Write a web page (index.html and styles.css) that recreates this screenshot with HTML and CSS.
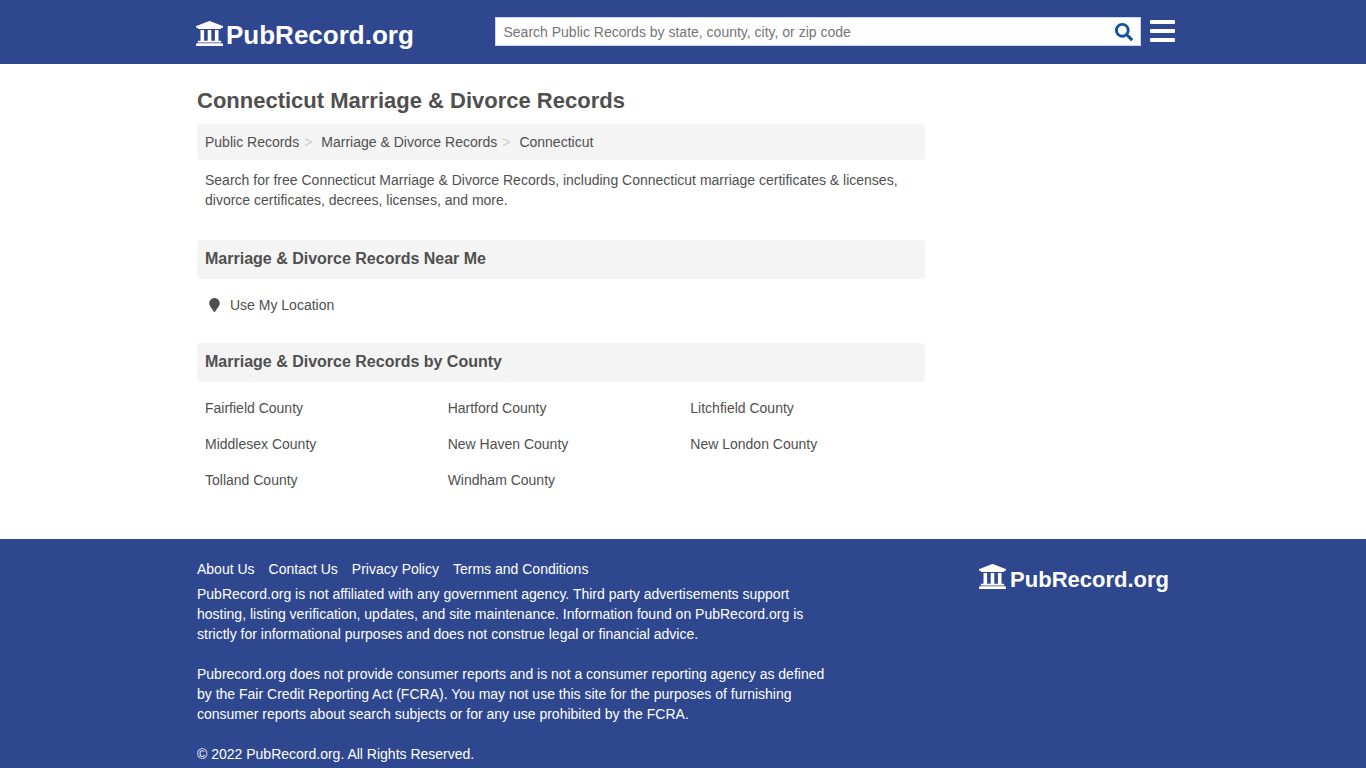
FILE: index.html
```html
<!DOCTYPE html>
<html lang="en">
	<head>
		<meta charset="UTF-8">
		<meta name="viewport" content="width=device-width, initial-scale=1.0">
		<title>Connecticut Marriage &amp; Divorce Records</title>
		<link rel="stylesheet" href="styles.css">
	</head>
	<body>
		<svg class="defs" width="0" height="0">
			<symbol id="landmark" viewBox="16 32 480 448" preserveAspectRatio="none">
				<path d="M496 128v16a8 8 0 0 1-8 8h-24v12c0 6.627-5.373 12-12 12H60c-6.627 0-12-5.373-12-12v-12H24a8 8 0 0 1-8-8v-16a8 8 0 0 1 4.941-7.392l232-88a7.996 7.996 0 0 1 6.118 0l232 88A8 8 0 0 1 496 128zm-24 304H40c-13.255 0-24 10.745-24 24v16a8 8 0 0 0 8 8h464a8 8 0 0 0 8-8v-16c0-13.255-10.745-24-24-24zM96 192v192H60c-6.627 0-12 5.373-12 12v20h416v-20c0-6.627-5.373-12-12-12h-36V192h-64v192h-64V192h-64v192h-64V192H96z"/>
			</symbol>
		</svg>

		<header class="header">
			<div class="container header-row">
				<a class="logo" href="#"><svg class="logo-icon"><use href="#landmark"/></svg><span>PubRecord.org</span></a>
				<form class="search">
					<input type="text" placeholder="Search Public Records by state, county, city, or zip code">
					<button type="button" aria-label="Search">
						<svg viewBox="0 0 512 512"><path d="M505 442.700L405.300 343c-4.500-4.500-10.600-7-17-7H372c27.600-35.300 44-79.700 44-128C416 93.100 322.900 0 208 0S0 93.100 0 208s93.100 208 208 208c48.300 0 92.700-16.400 128-44v16.300c0 6.400 2.500 12.500 7 17l99.700 99.700c9.400 9.400 24.600 9.400 33.900 0l28.300-28.300c9.400-9.400 9.400-24.600.1-34zM208 336c-70.700 0-128-57.200-128-128 0-70.700 57.200-128 128-128 70.700 0 128 57.200 128 128 0 70.700-57.200 128-128 128z"/></svg>
					</button>
				</form>
				<a class="menu" href="#" aria-label="Menu"><span></span><span></span><span></span></a>
			</div>
		</header>

		<main class="container">
			<div class="content">
				<h1>Connecticut Marriage &amp; Divorce Records</h1>
				<ol class="breadcrumb">
					<li><a href="#">Public Records</a></li>
					<li><a href="#">Marriage &amp; Divorce Records</a></li>
					<li><a href="#">Connecticut</a></li>
				</ol>
				<p class="intro">Search for free Connecticut Marriage &amp; Divorce Records, including Connecticut marriage certificates &amp; licenses, divorce certificates, decrees, licenses, and more.</p>

				<h2>Marriage &amp; Divorce Records Near Me</h2>
				<a class="location" href="#">
					<svg viewBox="0 0 384 512"><path d="M172.268 501.670C26.970 291.031 0 269.413 0 192 0 85.961 85.961 0 192 0s192 85.961 192 192c0 77.413-26.970 99.031-172.268 309.670-9.535 13.774-29.930 13.773-39.464 0z"/></svg>
					<span>Use My Location</span>
				</a>

				<h2>Marriage &amp; Divorce Records by County</h2>
				<ul class="counties">
					<li><a href="#">Fairfield County</a></li>
					<li><a href="#">Hartford County</a></li>
					<li><a href="#">Litchfield County</a></li>
					<li><a href="#">Middlesex County</a></li>
					<li><a href="#">New Haven County</a></li>
					<li><a href="#">New London County</a></li>
					<li><a href="#">Tolland County</a></li>
					<li><a href="#">Windham County</a></li>
				</ul>
			</div>
		</main>

		<footer class="footer">
			<div class="container footer-row">
				<div class="footer-text">
					<nav>
						<a href="#">About Us</a>
						<a href="#">Contact Us</a>
						<a href="#">Privacy Policy</a>
						<a href="#">Terms and Conditions</a>
					</nav>
					<p>PubRecord.org is not affiliated with any government agency. Third party advertisements support hosting, listing verification, updates, and site maintenance. Information found on PubRecord.org is strictly for informational purposes and does not construe legal or financial advice.</p>
					<p>Pubrecord.org does not provide consumer reports and is not a consumer reporting agency as defined by the Fair Credit Reporting Act (FCRA). You may not use this site for the purposes of furnishing consumer reports about search subjects or for any use prohibited by the FCRA.</p>
					<p>© 2022 PubRecord.org. All Rights Reserved.</p>
				</div>
				<a class="logo logo-small" href="#"><svg class="logo-icon"><use href="#landmark"/></svg><span>PubRecord.org</span></a>
			</div>
		</footer>
	</body>
</html>
```
FILE: styles.css
```css
* {
	box-sizing: border-box;
	margin: 0;
	padding: 0;
}

html {
	overflow: hidden;
}

body {
	font-family: Arial, "Liberation Sans", sans-serif;
	font-size: 14px;
	line-height: 20px;
	color: #4f4f4f;
	background: #fff;
}

a {
	color: inherit;
	text-decoration: none;
}

ul,
ol {
	list-style: none;
}

.defs {
	display: block;
}

.container {
	width: 972px;
	margin: 0 auto;
}

/* header */
.header {
	height: 64px;
	background: #2e478f;
}

.header-row {
	display: flex;
	align-items: flex-start;
}

.logo {
	display: flex;
	color: #fff;
	font-size: 26px;
	font-weight: bold;
	line-height: 30px;
}

.header .logo {
	width: 299px;
	margin-left: -1px;
	padding-top: 20px;
}

.logo-icon {
	width: 27px;
	height: 25px;
	margin: 1px 3px 0 0;
	fill: #fff;
}

.search {
	display: flex;
	width: 646px;
	height: 29px;
	margin-top: 17px;
	background: #fff;
	border: 1px solid #c5d9f5;
}

.search input {
	flex: 1;
	padding: 0 7.5px;
	border: 0;
	outline: 0;
	background: none;
	font: inherit;
}

.search input::placeholder {
	color: #757575;
}

.search button {
	width: 33px;
	padding: 0 7px 0 8px;
	border: 0;
	background: none;
}

.search svg {
	display: block;
	width: 18px;
	height: 18px;
	fill: #0f539c;
}

.menu {
	display: flex;
	flex-direction: column;
	gap: 5px;
	flex: none;
	width: 25px;
	margin: 19.5px -7px 0 9px;
}

.menu span {
	height: 4px;
	background: #fff;
	border-radius: 1px;
}

/* content */
.content {
	width: 728px;
	height: 475px;
	padding-top: 23px;
}

h1 {
	font-size: 22px;
	line-height: 27px;
}

.breadcrumb {
	display: flex;
	margin-top: 10px;
	padding: 8px;
	background: #f4f4f4;
	border-radius: 4px;
}

.breadcrumb li + li::before {
	content: ">";
	padding: 0 9px 0 5px;
	color: #ccc;
}

.intro {
	padding: 10px 8px 0;
}

h2 {
	margin-top: 30px;
	padding: 8px;
	font-size: 16px;
	line-height: 21px;
	height: 39px;
	background: #f4f4f4;
	border-radius: 4px;
}

.location {
	display: flex;
	align-items: center;
	margin-top: 16px;
	padding-left: 12px;
	height: 20px;
}

.location svg {
	width: 11px;
	height: 14px;
	margin-right: 10px;
	fill: #4f4f4f;
}

.location + h2 {
	margin-top: 28px;
}

.counties {
	display: grid;
	grid-template-columns: repeat(3, 1fr);
	row-gap: 16px;
	padding-top: 16px;
}

.counties li {
	padding-left: 8px;
}

/* footer */
.footer {
	background: #2e478f;
	color: #fff;
	min-height: 229px;
}

.footer-row {
	display: flex;
	justify-content: space-between;
	padding-top: 20px;
}

.footer-text {
	width: 632px;
}

.footer nav {
	display: flex;
	gap: 14px;
	margin-bottom: 5px;
}

.footer p {
	margin-bottom: 20px;
}

.logo-small {
	padding-top: 5px;
	font-size: 22px;
	line-height: 32px;
}

.logo-small .logo-icon {
	margin: 0 4px 0 0;
}
```
